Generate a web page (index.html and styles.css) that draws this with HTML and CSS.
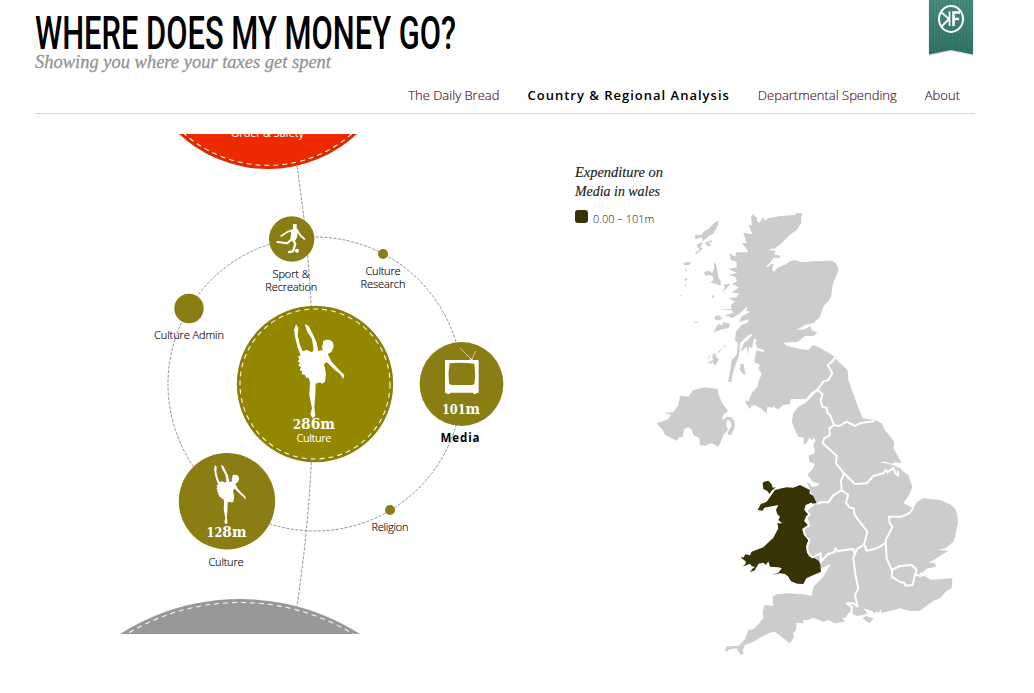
FILE: index.html
```html
<!DOCTYPE html>
<html lang="en">
<head>
<meta charset="utf-8">
<title>Where Does My Money Go?</title>
<link rel="stylesheet" href="styles.css">
</head>
<body>
<div class="page">
  <header class="header">
    <h1 class="title"><svg width="424" height="40" viewBox="0 0 424 40"><text class="title-text" x="0" y="36.500" textLength="421" lengthAdjust="spacingAndGlyphs">WHERE DOES MY MONEY GO?</text></svg></h1>
    <p class="tagline"><svg width="300" height="26" viewBox="0 0 300 26"><text class="tagline-text" x="0" y="18" textLength="296" lengthAdjust="spacingAndGlyphs">Showing you where your taxes get spent</text></svg></p>
    <nav class="nav">
      <a class="nav-link">The Daily Bread</a>
      <a class="nav-link nav-active">Country &amp; Regional Analysis</a>
      <a class="nav-link">Departmental Spending</a>
      <a class="nav-link">About</a>
    </nav>
    <svg class="ribbon" width="50" height="60" viewBox="926 0 50 60">
      <defs>
        <linearGradient id="teal" x1="0" y1="0" x2="0" y2="1"><stop offset="0" stop-color="#4b8c80"/><stop offset="1" stop-color="#2f7166"/></linearGradient>
        <pattern id="ribs" width="3" height="4" patternUnits="userSpaceOnUse"><rect width="1" height="4" fill="#22675b" opacity=".3"/></pattern>
      </defs>
      <path d="M928.500 0H973.500V56L951 51.500L928.500 56Z" fill="#ccc" opacity=".5"/>
      <path d="M929 0H973V54.500L951 50L929 54.500Z" fill="url(#teal)"/>
      <path d="M929 0H973V54.500L951 50L929 54.500Z" fill="url(#ribs)"/>
      <g fill="none" stroke="#fff"><ellipse cx="951" cy="19" rx="12" ry="13" stroke-width="2"/><path d="M949.500 11.500V26M941 12L949 19L941 27" stroke-width="1.800"/><path d="M953.500 26V12.500H960M953.500 19H959" stroke-width="2.600"/></g>
    </svg>
  </header>
  <main class="content">
    <svg class="bubbles" width="500" height="500" viewBox="35 134 500 500">
      <defs>
        <path id="dancer" d="M228 88L222 105L226 130L233 158L242 180L233 186L239 192L233 199L240 203L235 212L243 217L239 227L247 227L245 237L255 240L258 248L266 248L270 262L268 300L276 340L271 358L278 370L286 363L283 335L286 300L287 266L300 262L307 266L315 260L318 235L312 208L320 201L345 225L360 237L370 252L373 240L355 222L335 200L323 177L335 170L341 155L339 142L330 135L320 134L309 138L309 147L306 155L308 165L295 168L289 140L275 110L266 93L254 87L262 110L276 133L281 165L275 172L262 165L248 168L240 150L233 120L235 98Z"/>
      </defs>
      <g class="thread">
        <circle cx="315" cy="384" r="147"/>
        <path d="M297 166A1490 1490 0 0 1 297 606"/>
      </g>
      <circle cx="268" cy="38.400" r="130.600" fill="#d92c02"/><circle cx="268" cy="38.400" r="127" fill="#ed2900"/>
      <circle class="stitch" cx="268" cy="38.400" r="127"/>
      <text class="label-light" x="267.500" y="137" textLength="73">Order &amp; Safety</text>
      <circle cx="240" cy="822" r="223" fill="#989898"/>
      <circle class="stitch" cx="240" cy="822" r="219.500"/>
      <circle cx="315" cy="384" r="78.200" fill="#8a7f0a"/><circle cx="315" cy="384" r="75" fill="#938700"/>
      <circle class="stitch" cx="315" cy="384" r="75"/>
      <use href="#dancer" transform="translate(220 295) scale(.3333)" fill="#fff"/>
      <text class="amount" x="314" y="429" textLength="42" lengthAdjust="spacingAndGlyphs"><tspan class="low">2</tspan>86m</text>
      <text class="label-light" x="314" y="442" textLength="35">Culture</text>
      <g fill="#8a7d14">
        <circle cx="291.700" cy="239" r="22.700"/><circle cx="189" cy="308.500" r="14.700"/>
        <circle cx="383" cy="254" r="5"/><circle cx="461.500" cy="384" r="41.900"/>
        <circle cx="390" cy="510" r="5"/><circle cx="227" cy="501.300" r="48.200"/>
      </g>
      <use href="#dancer" transform="translate(167.230 446.500) scale(.2107)" fill="#fff"/>
      <g transform="translate(110 125) scale(.3333)" fill="#fff">
        <path d="M549 297H560V310L565 316L561 337L555 348H541L543 328L542 316L549 312Z"/>
        <path class="limb" d="M546 316L530 322L514 333M562 317L571 331L583 342" stroke-width="5"/>
        <path class="limb" d="M545 343L532 355L502 351" stroke-width="6"/>
        <path class="limb" d="M549 344L556 357L549 379L537 381" stroke-width="7"/>
        <circle cx="561" cy="377" r="6"/>
      </g>
      <g transform="translate(340 225) scale(.3333)" fill="none" stroke="#fff">
        <path d="M361 370L395 404L407 378" stroke-width="1.800"/><path fill="#fff" stroke="none" d="M389 405L394 400L399 405Z"/>
        <path fill="#fff" stroke="none" fill-rule="evenodd" d="M318 405H413Q416 405 416 409V503L409 504V507H401L399 503H331L329 507H321L320 504L315 503V408Q315 405 318 405ZM329 415Q323 445 327 475Q329 480 336 480H396Q402 480 404 474Q408 445 403 416Q366 411 329 415Z"/>
      </g>
      <text class="amount" x="461" y="414" textLength="38" lengthAdjust="spacingAndGlyphs"><tspan class="low">101</tspan>m</text>
      <text class="amount" x="226.500" y="537" textLength="40" lengthAdjust="spacingAndGlyphs"><tspan class="low">12</tspan>8m</text>
      <g class="labels">
        <text x="291" y="278" textLength="37">Sport &amp;</text><text x="291.300" y="291" textLength="52">Recreation</text>
        <text x="383" y="275" textLength="35">Culture</text><text x="383" y="288" textLength="45">Research</text>
        <text x="189" y="339" textLength="70">Culture Admin</text>
        <text class="label-strong" x="460" y="442" textLength="39">Media</text>
        <text x="390" y="531" textLength="37">Religion</text><text x="226" y="566" textLength="35">Culture</text>
      </g>
    </svg>
    <section class="region">
      <div class="legend">
        <p class="legend-title"><svg width="92" height="40" viewBox="0 0 92 40"><text x="0" y="14" textLength="88" lengthAdjust="spacingAndGlyphs">Expenditure on</text><text x="0" y="33" textLength="85" lengthAdjust="spacingAndGlyphs">Media in wales</text></svg></p>
        <div class="legend-row"><span class="swatch"></span><span>0.00 – 101m</span></div>
      </div>
      <svg class="map" width="310" height="455" viewBox="655 205 310 455">
        <g transform="translate(640 200) scale(.3333)" fill="#ccc">
          <path d="M325 75L336 76L333 48L340 42L345 50L352 52L350 62L358 70L365 57L372 52L373 62L385 55L420 48L465 45L470 38L487 40L483 58L484 70L470 90L450 105L425 130L405 145L382 150L408 153L402 162L422 168L418 174L402 173L390 188L378 200L384 202L395 190L402 193L396 208L402 216L412 203L440 192L450 184L465 180L485 187L520 184L575 182L588 190L596 208L588 230L578 255L573 290L567 300L550 320L540 350L522 368L495 375L468 390L495 388L512 378L515 390L532 398L520 408L495 408L475 425L430 428L440 437L480 447L505 450L520 435L540 443L560 455L585 470L562 495L577 520L560 540L545 550L528 570L510 585L497 598L453 597L450 612L430 615L415 628L402 622V612L398 624L382 620L380 641L362 625L345 615L333 618L330 628L317 608L318 600L326 604L335 580L352 560L357 540L365 523L355 505L360 495L342 485L350 450L372 457L372 450L352 444L346 428L351 420L342 415L336 445L327 438L325 462L320 440L300 457L312 430L338 405L332 401L320 410L300 430L296 470L290 485L278 520L275 545L264 545L270 515L275 480L290 465L294 430L285 420L288 395L305 375L322 368L327 358L300 365L270 372L298 365L304 350L330 335L318 333L323 318L300 340L278 354L255 345L280 338L275 330L232 330L275 326L272 315L285 305L265 295L290 292L297 280L275 278L297 262L275 252L292 243L285 230L265 225L290 218L265 207L290 202L290 185L272 180L270 160L285 170L290 157L325 157L318 145L305 128L320 130L310 98L338 103Z"/>
          <path d="M235 61V72L230 85L220 102L210 106L188 124L186 112L166 118L165 105L185 104L192 94L205 88L220 71ZM196 128L216 120V126L206 128L214 138L202 139ZM190 125L182 142L188 148L174 157L168 165L166 157L178 150L170 134ZM129 188L153 185L147 195L134 196ZM137 204L141 213L136 214ZM135 233L144 237L136 244ZM137 250L138 262L134 256ZM192 216L205 212L217 219L223 205L221 187L229 194L235 232L242 244V257L211 247L220 241L218 229L205 224L196 228ZM247 278L255 260L249 254L272 251ZM222 351L237 345L247 358L227 361ZM234 372L247 375L250 366L270 371L266 384L242 389L220 397ZM246 445L262 429L254 441ZM218 463L227 459V469L236 477L226 498L218 487L206 492V487L220 480L217 473ZM232 457L247 443L237 458ZM206 468L211 465L205 481ZM302 491L311 493L317 526L306 520L299 507ZM215 287L222 286L220 297ZM121 285L127 286L124 290ZM164 365H173V369H164Z"/>
          <path d="M50 670L85 658L93 645L73 638L100 637L115 615L120 587L145 590L160 570L195 562L232 567L238 590L248 612L264 632L248 648L246 660L254 656L260 650L275 652L284 665V682L274 705L262 703L268 688L275 680L271 663L262 660L258 670L264 690L250 705L245 720L235 740L215 730L206 732L197 738L180 735L178 715L160 705L155 688L145 682L132 688L128 712L118 711L110 722L75 705L68 690Z"/>
        </g>
        <g transform="translate(720 340) scale(.3333)">
          <path fill="#ccc" d="M345 55L383 90L385 120L410 190L428 235L465 240L485 250L495 270L515 295L523 305L520 325L535 350L545 370L524 366L515 371L495 365L480 368L498 370L520 376L540 385L548 393L565 405L577 440L570 460L550 490L580 504L592 485L610 475L660 480L690 493L705 505L712 525L714 550L705 590L700 605L685 618L675 625L655 630L685 632L665 645L645 658L625 668L645 668L648 680L620 686L605 700L598 707L620 710L630 719L697 715L695 745L680 752L660 775L640 782L600 812L570 813L540 805L500 815L484 818L482 806L478 818L470 815L462 820L458 813L430 805L443 820L430 825L410 828L388 816L375 834L366 833L375 845L345 850L325 840L310 845L280 833L265 840L250 840L250 850L230 848L228 870L219 880L222 890L210 910L190 895L165 875L150 878L125 890L100 905L75 915L68 930L71 940L62 945L50 925L30 928L15 937L18 920L36 918L55 918L75 898L85 870L102 867L130 835L128 817L133 795L160 798L157 770L170 763L205 760L250 763L275 768L280 740L310 710L332 672L305 685L275 665L255 620L262 590L250 575L268 550L258 515L290 490L275 460L260 425L270 432L275 440L295 438L297 430L280 427L262 405L280 385L284 372L268 366L266 347L284 340L283 325L280 312L287 303L281 292L276 302L268 292L260 310L250 312L252 293L235 290L225 270L215 245L220 220L235 200L255 190L285 160L310 125L337 105L323 75ZM428 835L438 828L460 835L455 842L448 850Z"/>
          <path fill="#393205" d="M290 490L280 468L268 460L270 450L240 435L220 443L200 442L185 445L165 450L140 485L122 493L113 510L128 512L133 503L175 495L168 510L172 523L180 530L175 540L187 550L172 550L175 565L160 593L130 622L95 635L90 646L75 643L72 652L62 652L78 665L76 673L68 680L90 671L95 679L105 680L96 687L82 688L98 687L89 696L103 692L116 671L130 668L138 675L145 664L150 680L175 682L185 685L175 698L155 705L180 700L195 702L205 710L213 724L232 731L250 732L259 715L303 695L300 665L284 655L266 649L262 620L268 600L265 590L252 578L250 567L268 556L258 545L260 530L270 525L257 510L258 500L272 491ZM128 430L132 425L145 422L155 433L158 443L168 442L155 452L148 462L142 453L130 447Z"/>
          <g class="borders">
            <path d="M345 52L338 64L323 75L337 100L325 120L310 125L292 150L276 160L260 180L236 184L212 182M292 150L308 163L302 180L307 200L320 203L322 218L330 225L342 255L358 258L380 245L405 258L425 248L465 243M342 255L328 265L330 285L312 296L308 310L350 347L348 370L372 400L405 432L440 430L460 408L490 400L498 390L503 397L520 383L526 401L535 407L533 392"/>
            <path d="M372 400L363 423L365 450L340 466L325 487L306 486L290 492M365 450L385 465L378 488L388 502L402 506L403 522L412 536L442 575L435 605L430 615L410 628L403 640L399 627L375 630L354 634L346 625L344 636L324 642L300 668M432 610L440 632L460 628L476 622L495 610M580 504L569 519L545 530L507 530L509 550L518 560L497 600L500 655L515 690L540 678L575 675L590 690L585 704L578 735L556 737L553 728L540 726L515 710L517 690M585 703L602 708L604 697M410 628L400 655L407 708L415 745L405 765L413 800L400 790H380L395 800L395 825"/>
            <path d="M302 670V640L277 652L264 638L261 620L268 600L254 583L250 568L268 556L256 542L261 530L269 525L256 509L259 498L276 490"/>
          </g>
        </g>
      </svg>
    </section>
  </main>
</div>
</body>
</html>
```
FILE: styles.css
```css
body {
  margin: 0;
  background: #fff;
  color: #111;
  font-family: "Open Sans", sans-serif;
}
.page {
  width: 940px;
  height: 693px;
  padding-left: 35px;
}
.header {
  position: relative;
  height: 113px;
  border-bottom: 1px solid #d3d6d4;
}
.title, .tagline, .legend-title { margin: 0; }
.title { height: 50px; padding-top: 12px; box-sizing: border-box; }
.title svg, .tagline svg, .legend-title svg { display: block; overflow: visible; }
.title-text {
  font: 500 46.5px Roboto, sans-serif;
  fill: #000;
}
.tagline { height: 35px; }
.tagline-text {
  font: italic 19px "Liberation Serif", serif;
  fill: #929592;
  stroke: #929592;
  stroke-width: .3px;
}
.nav {
  display: flex;
  justify-content: flex-end;
  gap: 28px;
  padding-right: 15px;
  font-size: 13px;
  line-height: 20px;
}
.nav-link { color: #4c0a2e; font-weight: 300; white-space: nowrap; -webkit-text-stroke: .15px #4c0a2e; }
.nav-active { color: #000; font-weight: 600; letter-spacing: 1px; -webkit-text-stroke: 0; }
.ribbon { position: absolute; top: 0; right: -1px; }
.content {
  display: flex;
  padding-top: 20px;
}
.bubbles { flex: none; overflow: hidden; }
.thread { fill: none; stroke: #858585; stroke-width: .9; stroke-dasharray: 3 1.5; }
.stitch { fill: none; stroke: #faf8df; stroke-width: 1.1; stroke-dasharray: 5 4; }
.limb { fill: none; stroke: #fff; stroke-linecap: round; stroke-linejoin: round; }
.label-light { font-size: 11px; fill: #fff; text-anchor: middle; }
.amount { font: bold 14.5px "DejaVu Serif", serif; fill: #fff; text-anchor: middle; }
.low { font-size: 12px; }
.labels { font-size: 11px; font-weight: 300; fill: #000; stroke: #000; stroke-width: .15px; text-anchor: middle; }
.label-strong { font-size: 11.5px; font-weight: 700; stroke: none; }
.region { display: flex; padding-left: 40px; }
.legend { width: 80px; flex: none; padding-top: 29px; white-space: nowrap; }
.legend-title { height: 46px; font: italic 14.5px "Liberation Serif", serif; }
.legend-title text { fill: #222; stroke: #222; stroke-width: .15px; }
.legend-row { display: flex; gap: 5px; font-size: 11px; font-weight: 300; line-height: 19px; color: #111; }
.swatch { width: 13px; height: 13px; margin-top: 1px; border-radius: 3px; background: #393205; flex: none; }
.map { flex: none; margin-top: 71px; }
.borders { fill: none; stroke: #fff; stroke-width: 6; stroke-linejoin: round; }
```
